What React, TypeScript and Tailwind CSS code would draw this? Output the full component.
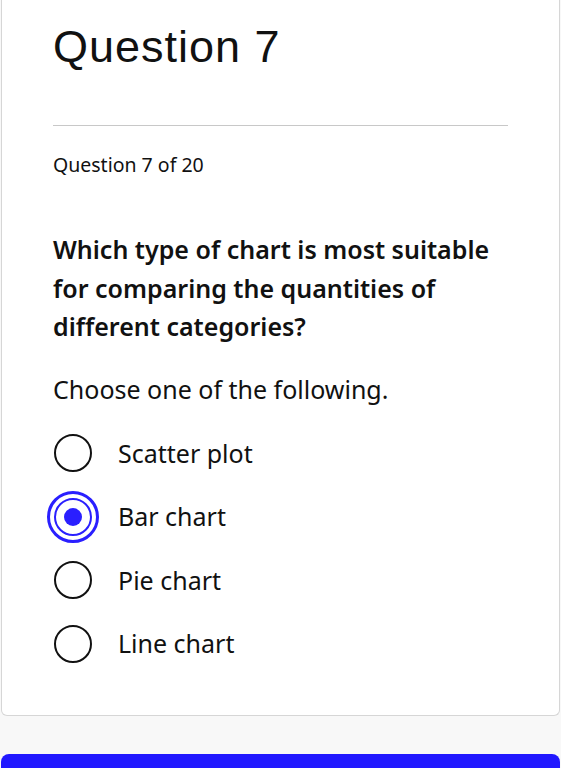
import React, { useState } from "react";

const options = ["Scatter plot", "Bar chart", "Pie chart", "Line chart"];

export default function App() {
  const [selected, setSelected] = useState(1);
  return (
    <div className="min-h-[768px] bg-[#f8f8f8] overflow-hidden" style={{ fontFamily: '"Noto Sans", sans-serif' }}>
      <div className="mx-px bg-white border border-t-0 border-[#d6d6d6] rounded-b-md pl-[51px] pr-[51px] pt-[20px] pb-[39px]">
        <h1 className="text-[45px] leading-[53px] tracking-[1px] text-[#111]" style={{ fontFamily: '"Liberation Sans", Arial, sans-serif' }}>
          Question 7
        </h1>
        <div className="mt-[52px] h-px bg-[#c8c8c8]" />
        <div className="mt-[26px] text-[19.5px] leading-[26px] text-[#111]">Question 7 of 20</div>
        <h2 className="mt-[52px] text-[25px] leading-[38.5px] font-semibold text-[#111]">
          Which type of chart is most suitable for comparing the quantities of different categories?
        </h2>
        <p className="mt-[27px] text-[25px] leading-[32px] text-[#111]">Choose one of the following.</p>
        <div className="mt-[17px] flex flex-col">
          {options.map((o, i) => (
            <label key={o} className="flex items-center h-[63.5px] cursor-pointer" onClick={() => setSelected(i)}>
              <span className="relative w-[38px] h-[38px] ml-[1px] flex items-center justify-center shrink-0">
                {selected === i ? (
                  <>
                    <span className="absolute -inset-[7px] rounded-full border-[3px] border-[#2a1fff]" />
                    <span className="absolute inset-0 rounded-full border-[2.5px] border-[#2a1fff]" />
                    <span className="w-[18px] h-[18px] rounded-full bg-[#2a1fff]" />
                  </>
                ) : (
                  <span className="absolute inset-0 rounded-full border-[2.5px] border-[#111]" />
                )}
              </span>
              <span className="ml-[26px] text-[25px] text-[#111]">{o}</span>
            </label>
          ))}
        </div>
      </div>
      <div className="mt-[38px] mx-px h-[60px] bg-[#2118ff] rounded-t-lg" />
    </div>
  );
}
